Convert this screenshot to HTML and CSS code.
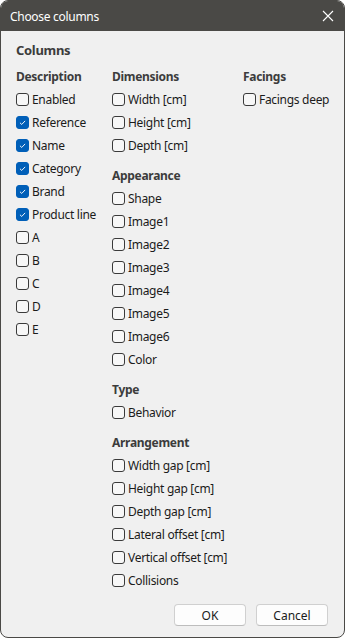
FILE: index.html
```html
<!DOCTYPE html>
<html lang="en">
<head>
  <meta charset="utf-8" />
  <meta name="viewport" content="width=device-width, initial-scale=1" />
  <title>Choose columns</title>
  <link rel="stylesheet" href="styles.css">
</head>
<body>
  <div class="window">
    <!-- Title bar -->
    <header class="titlebar">
      <span class="title">Choose columns</span>
      <button class="close" aria-label="Close">
        <svg width="12" height="12" viewBox="0 0 12 12"><path d="M1 1L11 11M11 1L1 11" stroke="#fff" stroke-width="1.1" fill="none"/></svg>
      </button>
    </header>

    <main class="content">
      <h1>Columns</h1>

      <div class="columns">
        <!-- Description -->
        <div class="col">
          <section class="group">
            <h2>Description</h2>
            <label class="check"><span class="box"></span>Enabled</label>
            <label class="check on"><span class="box"><svg viewBox="0 0 13 13"><path d="M3.5 6.8L5.6 8.8L9.6 4.6" /></svg></span>Reference</label>
            <label class="check on"><span class="box"><svg viewBox="0 0 13 13"><path d="M3.5 6.8L5.6 8.8L9.6 4.6" /></svg></span>Name</label>
            <label class="check on"><span class="box"><svg viewBox="0 0 13 13"><path d="M3.5 6.8L5.6 8.8L9.6 4.6" /></svg></span>Category</label>
            <label class="check on"><span class="box"><svg viewBox="0 0 13 13"><path d="M3.5 6.8L5.6 8.8L9.6 4.6" /></svg></span>Brand</label>
            <label class="check on"><span class="box"><svg viewBox="0 0 13 13"><path d="M3.5 6.8L5.6 8.8L9.6 4.6" /></svg></span>Product line</label>
            <label class="check"><span class="box"></span>A</label>
            <label class="check"><span class="box"></span>B</label>
            <label class="check"><span class="box"></span>C</label>
            <label class="check"><span class="box"></span>D</label>
            <label class="check"><span class="box"></span>E</label>
          </section>
        </div>

        <!-- Dimensions / Appearance / Type / Arrangement -->
        <div class="col">
          <section class="group">
            <h2>Dimensions</h2>
            <label class="check"><span class="box"></span>Width [cm]</label>
            <label class="check"><span class="box"></span>Height [cm]</label>
            <label class="check"><span class="box"></span>Depth [cm]</label>
          </section>
          <section class="group">
            <h2>Appearance</h2>
            <label class="check"><span class="box"></span>Shape</label>
            <label class="check"><span class="box"></span>Image1</label>
            <label class="check"><span class="box"></span>Image2</label>
            <label class="check"><span class="box"></span>Image3</label>
            <label class="check"><span class="box"></span>Image4</label>
            <label class="check"><span class="box"></span>Image5</label>
            <label class="check"><span class="box"></span>Image6</label>
            <label class="check"><span class="box"></span>Color</label>
          </section>
          <section class="group">
            <h2>Type</h2>
            <label class="check"><span class="box"></span>Behavior</label>
          </section>
          <section class="group">
            <h2>Arrangement</h2>
            <label class="check"><span class="box"></span>Width gap [cm]</label>
            <label class="check"><span class="box"></span>Height gap [cm]</label>
            <label class="check"><span class="box"></span>Depth gap [cm]</label>
            <label class="check"><span class="box"></span>Lateral offset [cm]</label>
            <label class="check"><span class="box"></span>Vertical offset [cm]</label>
            <label class="check"><span class="box"></span>Collisions</label>
          </section>
        </div>

        <!-- Facings -->
        <div class="col">
          <section class="group">
            <h2>Facings</h2>
            <label class="check"><span class="box"></span>Facings deep</label>
          </section>
        </div>
      </div>
    </main>

    <footer class="actions">
      <button class="btn">OK</button>
      <button class="btn">Cancel</button>
    </footer>
  </div>
</body>
</html>
```

FILE: styles.css
```css
/* ── Reset ── */
*,*::before,*::after{box-sizing:border-box;margin:0;padding:0;}

:root{
  --c-frame:#4a4946;
  --c-face:#f0f0f0;
  --c-text:#1b1b1b;
  --c-head:#3c3c3c;
  --c-accent:#005fb8;
}

body{
  background:#fff;
  font-family:"Noto Sans","Open Sans",sans-serif;
  font-size:12px;
  letter-spacing:-0.3px;
  color:var(--c-text);
  -webkit-font-smoothing:antialiased;
}

/* ── Window frame ── */
.window{
  display:flex;
  flex-direction:column;
  height:638px;
  border:1px solid var(--c-frame);
  border-radius:8px;
  overflow:hidden;
  background:var(--c-face);
}

.titlebar{
  display:flex;
  align-items:center;
  justify-content:space-between;
  height:30px;
  padding-left:9px;
  background:var(--c-frame);
  color:#fff;
}
.title{font-size:12px;}
.close{
  display:flex;
  align-items:center;
  justify-content:center;
  width:32px;
  height:30px;
  border:0;
  background:none;
}

/* ── Content ── */
.content{padding:8px 0 0 15px;}

.content h1{
  font-size:13px;
  font-weight:700;
  line-height:23px;
  color:var(--c-head);
}

.columns{
  display:grid;
  grid-template-columns:96px 131px 1fr;
  margin-top:3px;
}

.group + .group{margin-top:7px;}

.group h2{
  font-size:12px;
  font-weight:700;
  line-height:23px;
  color:var(--c-head);
}

.check{
  display:flex;
  align-items:center;
  gap:3px;
  height:23px;
  white-space:nowrap;
}

.box{
  display:inline-flex;
  flex:none;
  width:13px;
  height:13px;
  border:1px solid #3a3a3a;
  border-radius:3px;
  background:#f7f7f7;
}
.check.on .box{
  border-color:var(--c-accent);
  background:var(--c-accent);
}
.box svg{
  width:11px;
  height:11px;
  fill:none;
  stroke:#fff;
  stroke-width:1.1;
}

/* ── Buttons ── */
.actions{
  display:flex;
  justify-content:flex-end;
  gap:10px;
  margin-top:auto;
  padding:0 16px 11px 0;
}
.btn{
  width:72px;
  height:22px;
  font:inherit;
  color:var(--c-text);
  background:#fdfdfd;
  border:1px solid #d0d0d0;
  border-bottom-color:#bdbdbd;
  border-radius:4px;
}
```
